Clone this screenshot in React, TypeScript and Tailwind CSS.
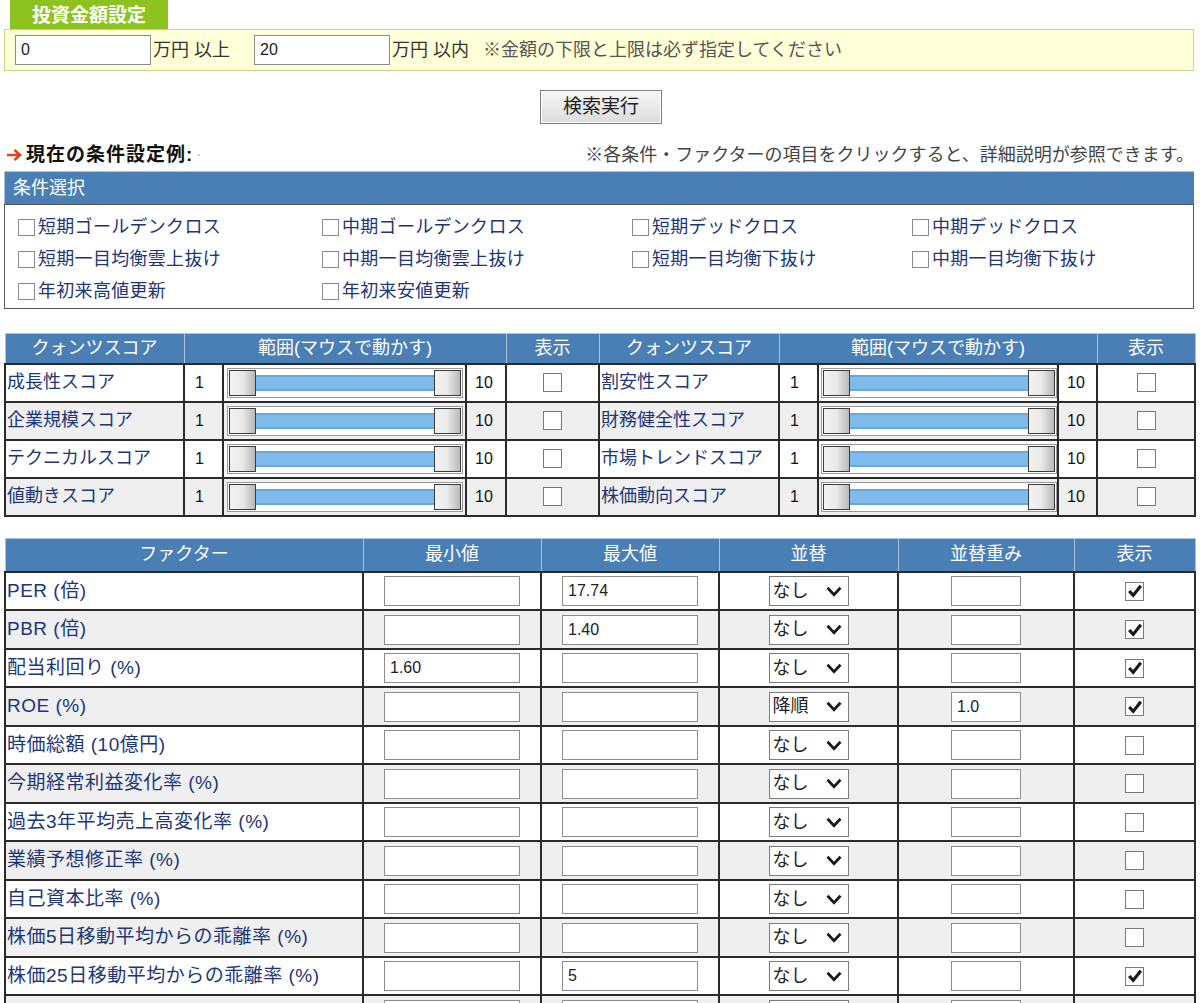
import React from 'react';

const conditions = [
  ['短期ゴールデンクロス', '中期ゴールデンクロス', '短期デッドクロス', '中期デッドクロス'],
  ['短期一目均衡雲上抜け', '中期一目均衡雲上抜け', '短期一目均衡下抜け', '中期一目均衡下抜け'],
  ['年初来高値更新', '年初来安値更新'],
];

const quants = [
  ['成長性スコア', '割安性スコア'],
  ['企業規模スコア', '財務健全性スコア'],
  ['テクニカルスコア', '市場トレンドスコア'],
  ['値動きスコア', '株価動向スコア'],
];

const factors = [
  { name: 'PER (倍)', min: '', max: '17.74', sort: 'なし', weight: '', show: true },
  { name: 'PBR (倍)', min: '', max: '1.40', sort: 'なし', weight: '', show: true },
  { name: '配当利回り (%)', min: '1.60', max: '', sort: 'なし', weight: '', show: true },
  { name: 'ROE (%)', min: '', max: '', sort: '降順', weight: '1.0', show: true },
  { name: '時価総額 (10億円)', min: '', max: '', sort: 'なし', weight: '', show: false },
  { name: '今期経常利益変化率 (%)', min: '', max: '', sort: 'なし', weight: '', show: false },
  { name: '過去3年平均売上高変化率 (%)', min: '', max: '', sort: 'なし', weight: '', show: false },
  { name: '業績予想修正率 (%)', min: '', max: '', sort: 'なし', weight: '', show: false },
  { name: '自己資本比率 (%)', min: '', max: '', sort: 'なし', weight: '', show: false },
  { name: '株価5日移動平均からの乖離率 (%)', min: '', max: '', sort: 'なし', weight: '', show: false },
  { name: '株価25日移動平均からの乖離率 (%)', min: '', max: '5', sort: 'なし', weight: '', show: true },
  { name: '株価75日移動平均からの乖離率 (%)', min: '', max: '', sort: 'なし', weight: '', show: false },
];

function SmallBox() {
  return <span className="inline-block h-[17px] w-[17px] shrink-0 border border-[#8a8a8a] bg-white" />;
}

function CheckBox({ checked }: { checked: boolean }) {
  return (
    <span className="mx-auto flex h-[19px] w-[19px] items-center justify-center border border-[#7a7a7a] bg-white">
      {checked && (
        <svg viewBox="0 0 16 16" className="h-[16px] w-[16px]">
          <path d="M2.2 8 L6.2 12.4 L13.8 2.8" fill="none" stroke="#1a1a1a" strokeWidth="3.2" strokeLinejoin="miter" />
        </svg>
      )}
    </span>
  );
}

function Handle() {
  return <div className="h-[26px] w-[27px] shrink-0 border border-[#3c3c3c] bg-gradient-to-r from-[#f2f2f2] via-[#e9e9e9] to-[#b9b9b9]" />;
}

function RangeSlider() {
  return (
    <div className="mx-auto flex h-[30px] w-[236px] items-center border border-[#9a9a9a] bg-white px-[1px]">
      <Handle />
      <div className="h-[16px] flex-1 border-y-2 border-[#6aa8dc] bg-[#7dbbea]" />
      <Handle />
    </div>
  );
}

function TextBox({ value, w, center = true }: { value: string; w: 'wide' | 'narrow'; center?: boolean }) {
  return (
    <div
      className={`flex h-[30px] shrink-0 items-center border border-[#8c8c8c] bg-white pl-[5px] text-[16px] text-[#222] ${
        w === 'wide' ? 'w-[136px]' : 'w-[70px]'
      } ${center ? 'mx-auto' : ''}`}
    >
      {value}
    </div>
  );
}

function SortSelect({ value }: { value: string }) {
  return (
    <div className="mx-auto flex h-[30px] w-[80px] items-center justify-between border border-[#7c7c7c] bg-white pl-[3px] pr-[6px] text-[18px] text-[#222]">
      <span>{value}</span>
      <svg viewBox="0 0 16 11" className="h-[11px] w-[16px]">
        <path d="M1.5 1.8 L8 8.6 L14.5 1.8" fill="none" stroke="#1a1a1a" strokeWidth="2.8" />
      </svg>
    </div>
  );
}

export default function App() {
  return (
    <div className="min-h-screen bg-white font-[family-name:'Liberation_Sans','Noto_Sans_CJK_JP',sans-serif] text-[18px] text-[#222]">
      <div className="ml-[4px] w-[1190px]">
        {/* 投資金額設定 */}
        <div className="ml-[6px] flex h-[29px] w-[158px] items-center justify-center bg-[#8ec31f] pt-[1px] text-[19px] font-bold leading-none text-white">
          投資金額設定
        </div>
        <div className="flex h-[42px] items-center border border-[#c3d68c] bg-[#ffffd8] pl-[10px] text-[#333]">
          <TextBox value="0" w="wide" center={false} />
          <span className="ml-[2px] w-[101px] text-[18px]">万円 以上</span>
          <TextBox value="20" w="wide" center={false} />
          <span className="ml-[2px] text-[18px]">万円 以内</span>
          <span className="ml-[14px] text-[18px] text-[#555]">※金額の下限と上限は必ず指定してください</span>
        </div>

        <div className="mt-[19px] flex justify-center">
          <button className="ml-[4px] h-[34px] w-[122px] border border-[#7d7d7d] bg-gradient-to-b from-[#f7f7f7] to-[#dcdcdc] text-[19px] text-[#222] shadow-[inset_0_0_0_1px_#fff]">
            検索実行
          </button>
        </div>

        <div className="mt-[20px] flex h-[22px] items-center justify-between">
          <div className="flex items-center font-bold">
            <svg viewBox="0 0 16 14" className="ml-[2px] mr-[4px] h-[14px] w-[16px]">
              <path d="M1 7 H13 M8.5 2 L14 7 L8.5 12" fill="none" stroke="#e2461c" strokeWidth="2.6" />
            </svg>
            <span className="text-[19px] tracking-[1px] text-[#111]">現在の条件設定例:</span>
            <span className="ml-[4px] text-[10px] text-[#aaa]">·</span>
          </div>
          <span className="text-[18px] text-[#444]">※各条件・ファクターの項目をクリックすると、詳細説明が参照できます。</span>
        </div>

        {/* 条件選択 */}
        <div className="mt-[5px]">
          <div className="flex h-[33px] items-center border-t border-l border-[#a9c3dc] bg-[#4a7fb5] pl-[8px] text-white">
            条件選択
          </div>
          <div className="border border-[#555] bg-white pb-[1px] pl-[13px] pt-[6px]">
            {conditions.map((row, i) => (
              <div key={i} className="grid h-[32px] grid-cols-[304px_310px_280px_1fr] items-center">
                {row.map((c) => (
                  <div key={c} className="flex items-center gap-[3px] tracking-[0.3px] text-[#1d3677]">
                    <SmallBox />
                    <span>{c}</span>
                  </div>
                ))}
              </div>
            ))}
          </div>
        </div>

        {/* クォンツスコア */}
        <table className="mt-[24px] w-[1190px] table-fixed border-collapse">
          <colgroup>
            <col className="w-[179px]" />
            <col className="w-[39px]" />
            <col className="w-[243px]" />
            <col className="w-[40px]" />
            <col className="w-[93px]" />
            <col className="w-[180px]" />
            <col className="w-[39px]" />
            <col className="w-[240px]" />
            <col className="w-[39px]" />
            <col className="w-[98px]" />
          </colgroup>
          <thead>
            <tr className="h-[30px] bg-[#4a7fb5] text-white">
              <th className="border border-[#a9c3dc] font-normal">クォンツスコア</th>
              <th colSpan={3} className="border border-[#a9c3dc] font-normal">範囲(マウスで動かす)</th>
              <th className="border border-[#a9c3dc] font-normal">表示</th>
              <th className="border border-[#a9c3dc] font-normal">クォンツスコア</th>
              <th colSpan={3} className="border border-[#a9c3dc] font-normal">範囲(マウスで動かす)</th>
              <th className="border border-[#a9c3dc] font-normal">表示</th>
            </tr>
          </thead>
          <tbody>
            {quants.map((pair, i) => (
              <tr key={i} className={`h-[38px] ${i % 2 ? 'bg-[#efefef]' : 'bg-white'}`}>
                {pair.map((name) => (
                  <React.Fragment key={name}>
                    <td className="border-2 border-[#2b2b2b] pl-[1px] text-[#1d3677]">{name}</td>
                    <td className="border-2 border-[#2b2b2b] pl-[10px] text-[16px] text-[#111]">1</td>
                    <td className="border-2 border-[#2b2b2b] px-[2px]">
                      <RangeSlider />
                    </td>
                    <td className="border-2 border-[#2b2b2b] pl-[8px] text-[16px] text-[#111]">10</td>
                    <td className="border-2 border-[#2b2b2b]">
                      <CheckBox checked={false} />
                    </td>
                  </React.Fragment>
                ))}
              </tr>
            ))}
          </tbody>
        </table>

        {/* ファクター */}
        <table className="mt-[21px] w-[1190px] table-fixed border-collapse">
          <colgroup>
            <col className="w-[358px]" />
            <col className="w-[178px]" />
            <col className="w-[178px]" />
            <col className="w-[179px]" />
            <col className="w-[176px]" />
            <col className="w-[121px]" />
          </colgroup>
          <thead>
            <tr className="h-[34px] bg-[#4a7fb5] text-white">
              <th className="border border-[#a9c3dc] font-normal">ファクター</th>
              <th className="border border-[#a9c3dc] font-normal">最小値</th>
              <th className="border border-[#a9c3dc] font-normal">最大値</th>
              <th className="border border-[#a9c3dc] font-normal">並替</th>
              <th className="border border-[#a9c3dc] font-normal">並替重み</th>
              <th className="border border-[#a9c3dc] font-normal">表示</th>
            </tr>
          </thead>
          <tbody>
            {factors.map((f, i) => (
              <tr key={f.name} className={`${i % 2 ? 'h-[39px] bg-[#efefef]' : 'h-[38px] bg-white'}`}>
                <td className="border-2 border-[#2b2b2b] pl-[1px] text-[19px] tracking-[0.5px] text-[#1d3677]">{f.name}</td>
                <td className="border-2 border-[#2b2b2b]">
                  <TextBox value={f.min} w="wide" />
                </td>
                <td className="border-2 border-[#2b2b2b]">
                  <TextBox value={f.max} w="wide" />
                </td>
                <td className="border-2 border-[#2b2b2b]">
                  <SortSelect value={f.sort} />
                </td>
                <td className="border-2 border-[#2b2b2b]">
                  <TextBox value={f.weight} w="narrow" />
                </td>
                <td className="border-2 border-[#2b2b2b]">
                  <CheckBox checked={f.show} />
                </td>
              </tr>
            ))}
          </tbody>
        </table>
      </div>
    </div>
  );
}
